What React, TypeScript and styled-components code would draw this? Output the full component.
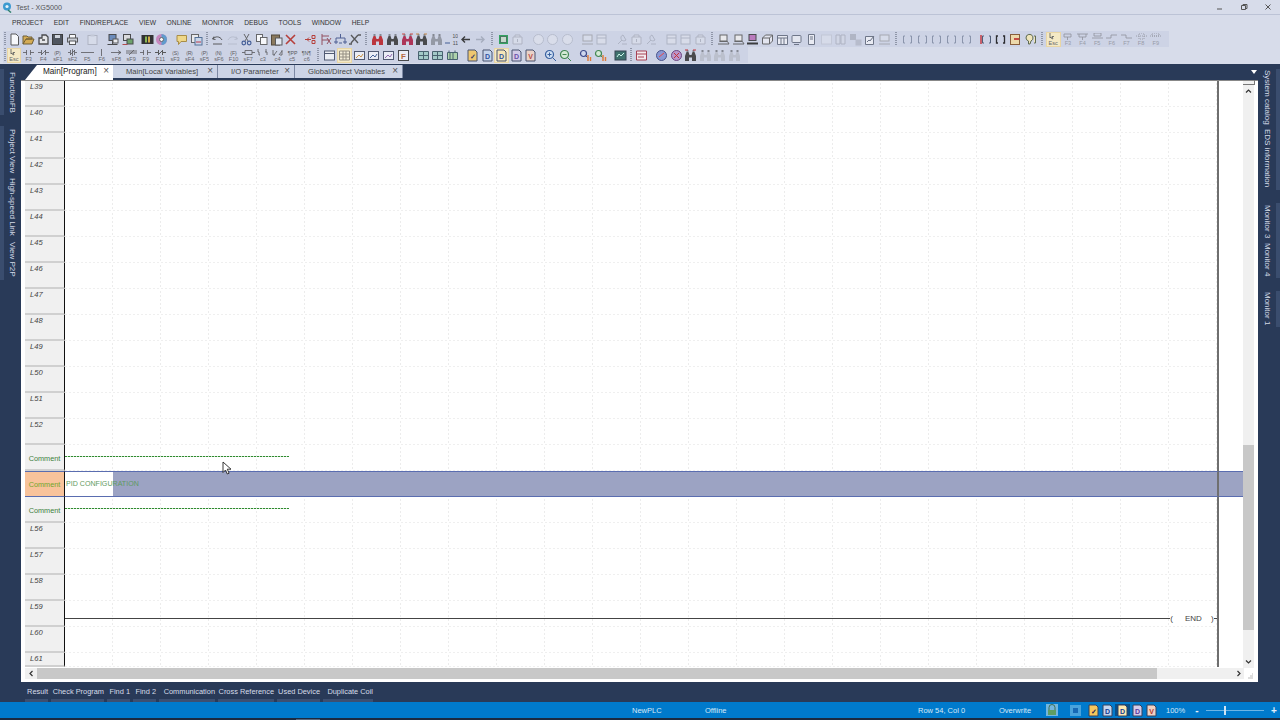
import React from 'react'
import styled, { createGlobalStyle, css } from 'styled-components'

const Global = createGlobalStyle`
	html, body {
		margin: 0;
		padding: 0;
		background: #293a58;
		overflow: hidden;
	}
	* {
		box-sizing: border-box;
	}
`

const NAVY = '#293a58'
const BAND = '#cdd3e5'
const CHROME = '#d7dcea'
const FONT = '"Liberation Sans", Arial, sans-serif'

const Page = styled.div`
	position: relative;
	width: 1280px;
	height: 720px;
	display: flex;
	flex-direction: column;
	overflow: hidden;
	font-family: ${FONT};
	background: ${NAVY};
`

const TitleBar = styled.div`
	height: 15px;
	flex: none;
	display: flex;
	align-items: center;
	padding-left: 2px;
	background: ${CHROME};
	border-bottom: 1px solid #bcc3d6;
	color: #555;
	font-size: 7.2px;
`

const TitleText = styled.span`
	margin-left: 4px;
	flex: 1;
`

const WinButton = styled.span`
	width: 24px;
	display: flex;
	justify-content: center;
	color: #555;
`

const WinButtons = styled.div`
	display: flex;
`

const MenuBar = styled.div`
	height: 15px;
	flex: none;
	display: flex;
	align-items: center;
	gap: 10.6px;
	padding-left: 12px;
	background: ${CHROME};
	color: #333;
	font-size: 6.7px;
`

const ToolbarBlock = styled.div`
	height: 34px;
	flex: none;
	display: flex;
	flex-direction: column;
	padding-top: 1px;
	background: ${CHROME};
`

const ToolRow = styled.div`
	height: 16px;
	display: flex;
	align-items: center;
	align-self: flex-start;
	margin-left: 3px;
	padding-right: 6px;
	background: ${BAND};
`

const Cell = styled.span<{ $on?: boolean; $off?: boolean }>`
	width: 14.65px;
	height: 15px;
	flex: none;
	display: flex;
	flex-direction: column;
	align-items: center;
	justify-content: center;
	color: #444;
	opacity: ${({ $off }) => ($off ? 0.45 : 0.85)};
	${({ $on }) =>
		$on &&
		css`
			background: #fbeec0;
			box-shadow: inset 0 0 0 1px #eed79a;
		`}
`

const KeyLabel = styled.span`
	font-size: 5.6px;
	line-height: 6px;
	color: #555;
`

const Sep = styled.span`
	width: 5.4px;
	flex: none;
`

const Grip = styled.span<{ $w: number }>`
	width: ${({ $w }) => $w}px;
	height: 14px;
	flex: none;
	background: repeating-linear-gradient(180deg, #8f96a8 0 1px, transparent 1px 2px);
	background-size: 2px 100%;
	background-repeat: no-repeat;
	background-position: center;
`

const Body = styled.div`
	flex: 1;
	display: flex;
	min-height: 0;
	padding-top: 1px;
`

const Dock = styled.div<{ $side: 'left' | 'right' }>`
	width: ${({ $side }) => ($side === 'left' ? '21px' : '22px')};
	flex: none;
	display: flex;
	flex-direction: column;
	padding-top: 4px;
`

const DockTab = styled.div<{ $side: 'left' | 'right'; $h: number; $after?: number }>`
	height: ${({ $h }) => $h}px;
	margin-bottom: ${({ $after }) => $after ?? 0}px;
	flex: none;
	writing-mode: vertical-rl;
	text-align: center;
	font-size: 8px;
	color: #d5dbe8;
	white-space: nowrap;
	${({ $side }) =>
		$side === 'left'
			? css`
					width: 20px;
					line-height: 16px;
					border-left: 4px solid #3a4d6e;
				`
			: css`
					line-height: 14px;
					border-right: 4px solid #3a4d6e;
					padding-right: 2px;
				`}
`

const Center = styled.div`
	flex: 1;
	min-width: 0;
	display: flex;
	flex-direction: column;
`

const TabStrip = styled.div`
	height: 15px;
	flex: none;
	display: flex;
	align-items: stretch;
	padding-left: 4px;
`

const Tab = styled.div<{ $active?: boolean; $w: number }>`
	width: ${({ $w }) => $w}px;
	flex: none;
	display: flex;
	align-items: center;
	justify-content: space-between;
	font-size: 7.6px;
	color: #444;
	padding: 0 4px 1px 13px;
	margin-bottom: 2px;
	background: #ccd4e6;
	border-right: 1px solid #7d89a4;
	${({ $active }) =>
		$active &&
		css`
			background: #fff;
			color: #222;
			font-size: 8.2px;
			padding: 0 4px 3px 18px;
			margin-bottom: 0;
			border-right: none;
			clip-path: polygon(12px 0, 100% 0, 100% 100%, 0 100%);
		`}
`

const TabClose = styled.span`
	font-size: 10px;
	color: #555;
	line-height: 1;
`

const TabFill = styled.div`
	flex: 1;
`

const TabMenu = styled.span`
	width: 0;
	height: 0;
	margin: 5px 1px 0 0;
	border-left: 3.5px solid transparent;
	border-right: 3.5px solid transparent;
	border-top: 4px solid #fff;
`

const Panel = styled.div`
	height: 602px;
	flex: none;
	display: flex;
	flex-direction: column;
	background: #fff;
	border-top: 1px solid #888;
	padding: 0 4px 3px 4px;
`

const Upper = styled.div`
	height: 587px;
	flex: none;
	display: flex;
`

const Sheet = styled.div`
	flex: 1;
	min-width: 0;
	display: flex;
	flex-direction: column;
	overflow: hidden;
`

const Row = styled.div<{ $selected?: boolean; $cut?: boolean }>`
	height: ${({ $cut }) => ($cut ? '14px' : '26px')};
	flex: none;
	display: flex;
	${({ $selected }) =>
		$selected &&
		css`
			background: #9ca3c3;
			box-shadow:
				inset 0 1px 0 #5a6db0,
				inset 0 -1px 0 #5a6db0;
		`}
`

const Head = styled.div<{ $kind: 'line' | 'comment' | 'selected' }>`
	width: 40px;
	flex: none;
	display: flex;
	background: #f0f0f0;
	border-right: 1px solid #111;
	border-bottom: 2px solid #d0d0d0;
	${({ $kind }) =>
		$kind === 'line'
			? css`
					padding: 1px 0 0 5px;
					font-style: italic;
					font-size: 7.6px;
					color: #444;
				`
			: css`
					align-items: center;
					justify-content: center;
					padding-top: 2px;
					font-size: 7.3px;
					color: #3d7f3d;
				`}
	${({ $kind }) =>
		$kind === 'selected' &&
		css`
			background: #f8c39b;
			color: #72a52c;
			padding-top: 0;
			border-top: 1px solid #5a6db0;
			border-bottom: 1px solid #5a6db0;
		`}
`

const Lane = styled.div<{ $top?: number }>`
	width: 1154px;
	flex: none;
	display: flex;
	align-items: flex-start;
	padding-top: ${({ $top }) => $top ?? 0}px;
	border-right: 2px solid #6f6f6f;
	background-color: #fff;
	background-image:
		repeating-linear-gradient(90deg, #efefef 0 2px, #fff 2px 4px),
		repeating-linear-gradient(180deg, #fff 0 2px, transparent 2px 4px),
		repeating-linear-gradient(90deg, transparent 0 47px, #ececec 47px 48px);
	background-size:
		100% 1px,
		auto,
		auto;
	background-position:
		0 100%,
		0 0,
		0 0;
	background-repeat: no-repeat, repeat, repeat;
`

const SelectedLane = styled.div`
	width: 1154px;
	flex: none;
	display: flex;
	border-right: 2px solid #6f6f6f;
	border-top: 1px solid #5a6db0;
	border-bottom: 1px solid #5a6db0;
`

const CommentBox = styled.div`
	width: 48px;
	height: 100%;
	flex: none;
	display: flex;
	align-items: center;
	padding-left: 1px;
	background: #fff;
	font-size: 7.1px;
	color: #5f9a62;
	white-space: nowrap;
`

const Dashes = styled.div`
	width: 224px;
	height: 1px;
	background: repeating-linear-gradient(90deg, #2f8a2f 0 2px, #cfe6cf 2px 3px);
`

const RungLine = styled.div`
	width: 1107px;
	height: 1px;
	background: #444;
`

const EndCoil = styled.div`
	display: flex;
	align-items: center;
	height: 1px;
	font-size: 8px;
	color: #444;
`

const EndTail = styled.span`
	width: 3px;
	height: 1px;
	background: #444;
`

const EndParen = styled.span<{ $gap: number }>`
	width: 3px;
	margin-left: ${({ $gap }) => $gap}px;
`

const EndLabel = styled.span`
	width: 15px;
	margin-left: 12px;
	white-space: nowrap;
`

const VScroll = styled.div`
	width: 11px;
	flex: none;
	display: flex;
	flex-direction: column;
	align-items: center;
	background: #f0f0f0;
	color: #444;
`

const VArrow = styled.span<{ $end?: boolean }>`
	height: 19px;
	flex: none;
	display: flex;
	align-items: ${({ $end }) => ($end ? 'flex-end' : 'center')};
	padding-top: 1px;
	padding-bottom: ${({ $end }) => ($end ? '3px' : '0')};
`

const VTrack = styled.div`
	flex: 1;
	width: 100%;
	padding-top: 345px;
`

const VThumb = styled.div`
	height: 185px;
	background: #c8c8c8;
`

const HScroll = styled.div`
	height: 11px;
	flex: none;
	display: flex;
	align-items: center;
	background: #f0f0f0;
	color: #444;
`

const HArrow = styled.span`
	width: 12px;
	flex: none;
	display: flex;
	justify-content: center;
`

const HThumb = styled.div`
	width: 1120px;
	height: 100%;
	flex: none;
	background: #c8c8c8;
`

const HFill = styled.div`
	flex: 1;
`

const Corner = styled.span`
	width: 10px;
	height: 100%;
	flex: none;
	display: flex;
	align-items: flex-end;
	justify-content: flex-end;
	background: #fff;
`

const CornerHook = styled.span`
	position: absolute;
	left: 1243px;
	top: 80px;
	width: 12px;
	height: 5px;
	border-right: 1px solid #777;
	border-bottom: 1px solid #777;
`

const BottomTabs = styled.div`
	height: 20px;
	flex: none;
	display: flex;
	padding-left: 4px;
	gap: 3px;
	padding-top: 4px;
`

const BottomTab = styled.div<{ $w: number }>`
	width: ${({ $w }) => $w}px;
	height: 16px;
	flex: none;
	font-size: 7.4px;
	line-height: 11px;
	color: #d8deea;
	text-align: right;
	white-space: nowrap;
	border-bottom: 3px solid #3d4f70;
`

const StatusBar = styled.div`
	height: 16px;
	flex: none;
	display: flex;
	align-items: center;
	background: #007acc;
	color: #d6e9f7;
	font-size: 7.5px;
`

const StatusText = styled.span<{ $w: number }>`
	width: ${({ $w }) => $w}px;
	flex: none;
	white-space: nowrap;
`

const StatusIcon = styled.span<{ $w?: number; $on?: boolean }>`
	width: ${({ $w }) => $w ?? 14.6}px;
	height: 12px;
	flex: none;
	display: flex;
	justify-content: center;
	align-items: center;
	${({ $on }) =>
		$on &&
		css`
			background: #0a4f88;
		`}
`

const Slider = styled.div`
	width: 58px;
	height: 1px;
	margin: 0 5px 0 4px;
	flex: none;
	display: flex;
	justify-content: center;
	align-items: center;
	background: #6db4e4;
`

const SliderThumb = styled.span`
	width: 2px;
	height: 9px;
	margin-right: 20px;
	flex: none;
	background: #cfe4f4;
`

const Zoomer = styled.span`
	width: 10px;
	flex: none;
	text-align: center;
	font-size: 10px;
	font-weight: bold;
	color: #e4f0fa;
`

const Footer = styled.div`
	height: 2px;
	flex: none;
	padding: 1px 0 0 296px;
	background: #1b2a40;
`

const FooterMark = styled.div`
	width: 24px;
	height: 1px;
	background: #56667c;
`

const Cursor = styled.svg`
	position: absolute;
	left: 222px;
	top: 461px;
`

const S = { fill: 'none', stroke: '#444', strokeWidth: 1 }

const binoculars = (c: string) => (
	<>
		<path d="M1 12V7l1.500-4h2L5.500 6h2l1-3h2L12 7v5H8V8.500H5V12z" fill={c} />
		<path d="M2.500 2h2M8.500 2h2" stroke="#222" />
	</>
)

const docLetter = (fill: string, ink: string, text: string) => (
	<>
		<path d="M2 1h7l2 2v9H2z" fill={fill} stroke="#35415c" />
		<text x="6.5" y="9.6" fontSize="7" fontWeight="bold" textAnchor="middle" fill={ink} fontFamily={FONT}>
			{text}
		</text>
	</>
)

const picture = (c: string) => (
	<>
		<rect x="1.5" y="2.5" width="10" height="8" fill="#eef1f8" stroke="#3c4660" />
		<path d="M3 9l3-3 2 2 2-3" fill="none" stroke={c} />
	</>
)

const bracket = <path d="M4 3H2.500v7H4M9 3h1.500v7H9" fill="none" stroke="#3b4a66" />

const art: Record<string, React.ReactNode> = {
	doc: <path d="M3 1h5l2.500 2.500V12H3z" fill="#fff" stroke="#444" />,
	folder: <path d="M1 11V3h4l1 1h4v2H4l-3 5h9l2-5H4" fill="#d7a63c" stroke="#5f4a18" />,
	box: <path d="M2 11V5h3V2h4l2 2v7zM5 7h3" fill="#e9e9e9" stroke="#333" strokeWidth="1.3" />,
	save: (
		<>
			<rect x="1.5" y="1.5" width="10" height="10" fill="#3a4048" stroke="#222" />
			<rect x="4" y="2" width="5" height="3" fill="#cfd3da" />
		</>
	),
	print: (
		<>
			<path d="M3.500 5V1.500h6V5" fill="#fff" stroke="#444" />
			<rect x="1.5" y="5" width="10" height="4" fill="#c9ccd4" stroke="#444" />
			<rect x="3.5" y="8" width="6" height="3.5" fill="#fff" stroke="#444" />
		</>
	),
	clip: (
		<>
			<rect x="2" y="2.5" width="9" height="9" fill="#e3e6ee" stroke="#8b8f9b" />
			<rect x="4.5" y="1.5" width="4" height="2" fill="#b6bac6" />
		</>
	),
	net: (
		<>
			<rect x="3" y="1.5" width="7" height="6" fill="#5b7fb4" stroke="#333" />
			<path d="M1.500 11.500h10M6.500 8v3" stroke="#333" />
			<rect x="7" y="6" width="5" height="4" fill="#efefef" stroke="#444" />
		</>
	),
	net2: (
		<>
			<rect x="2.5" y="1.5" width="7" height="6" fill="#ddd" stroke="#333" />
			<rect x="6" y="6" width="6" height="5" fill="#5d9a58" stroke="#333" />
			<path d="M1.500 11.500h5" stroke="#a33" />
		</>
	),
	film: (
		<>
			<rect x="0.5" y="2" width="12" height="9" fill="#171717" />
			<rect x="4" y="3.5" width="2" height="6" fill="#7bb23c" />
			<rect x="7" y="3.5" width="2" height="6" fill="#d1a22e" />
		</>
	),
	disc: (
		<>
			<circle cx="6.5" cy="6.5" r="5.5" fill="#c77ab8" />
			<path d="M6.500 1a5.500 5.500 0 0 1 0 11z" fill="#4e93c9" />
			<circle cx="6.5" cy="6.5" r="2" fill="#fff" stroke="#555" />
		</>
	),
	bubble: <path d="M2 2.500h9.500v6H6l-2.500 3v-3H2z" fill="#f6d878" stroke="#a2812c" />,
	pages: (
		<>
			<rect x="1.5" y="1.5" width="7" height="8" fill="#eee" stroke="#555" />
			<rect x="5" y="4.5" width="7" height="7.5" fill="#c9d7ea" stroke="#40608c" />
			<path d="M6 9h5" stroke="#b23" />
		</>
	),
	undo: <path d="M3 3.500L1.500 6 4.500 6.500M2 6c2-3 7-3 9 1M2 11h9" {...S} />,
	redo: <path d="M10 3.500L11.500 6 8.500 6.500M11 6c-2-3-7-3-9 1M2 11h9" {...S} stroke="#9ea4b4" />,
	cut: (
		<>
			<path d="M4 1l4 7M9 1L5 8" fill="none" stroke="#555" />
			<circle cx="3.8" cy="10" r="1.8" fill="none" stroke="#2d4a8a" strokeWidth="1.2" />
			<circle cx="9.2" cy="10" r="1.8" fill="none" stroke="#2d4a8a" strokeWidth="1.2" />
		</>
	),
	copy: (
		<>
			<rect x="1.5" y="1.5" width="6" height="7" fill="#fff" stroke="#555" />
			<rect x="5.5" y="4.5" width="6.5" height="7" fill="#fff" stroke="#555" />
		</>
	),
	paste: (
		<>
			<rect x="1.5" y="2" width="8" height="10" fill="#7f6a46" stroke="#3e3320" />
			<rect x="5.5" y="5" width="6.5" height="7" fill="#e8ecf4" stroke="#444" />
		</>
	),
	del: <path d="M2 2l9 9M11 2L2 11" fill="none" stroke="#b3261e" strokeWidth="1.6" />,
	ins: <path d="M1 6.500h6M5 4.500l-2 2 2 2M8 2.500h3v3H8zM8 7.500h3v3H8z" fill="none" stroke="#b3261e" />,
	cutl: <path d="M3 1v11M3 3h7M3 7h7M8 5l4 6M12 5l-4 6" fill="none" stroke="#8a3b4a" />,
	tree: <path d="M6.500 1v4M2 7V5h9v2M1 8h2v2H1zM10 8h2v2h-2zM5 10h3" fill="none" stroke="#3a4c86" />,
	xc: <path d="M3 2l7 8M10 2l-7 8M1 11h3M10 2h3" fill="none" stroke="#444" strokeWidth="1.3" />,
	binoR: binoculars('#b81a20'),
	bino: binoculars('#333'),
	binoO: (
		<>
			{binoculars('#a81a40')}
			<path d="M1 1h3M9 1h3" stroke="#d0342c" />
		</>
	),
	binoK: (
		<>
			{binoculars('#333')}
			<path d="M1 1h3M9 1h3" stroke="#c47a2c" />
		</>
	),
	binoG: binoculars('#8b8f9b'),
	num: (
		<>
			<text x="13" y="5" fontSize="5" textAnchor="end" fill="#333" fontFamily={FONT}>
				10
			</text>
			<text x="13" y="12" fontSize="5" textAnchor="end" fill="#333" fontFamily={FONT}>
				11
			</text>
			<path d="M0 10h5" stroke="#2d4a8a" />
		</>
	),
	left: <path d="M11 6.500H3M6 3.500l-3 3 3 3" fill="none" stroke="#222" strokeWidth="1.4" />,
	right: <path d="M2 6.500h8M7 3.500l3 3-3 3" fill="none" stroke="#77808f" strokeWidth="1.4" />,
	frame: (
		<>
			<rect x="2.5" y="2.5" width="8" height="8" fill="#2f6b4a" stroke="#1a9a4a" />
			<rect x="4" y="4" width="5" height="5" fill="#c7d8c8" />
		</>
	),
	cross: <path d="M2 4h9v7H2zM4 4V2h5v2M6.500 6v3" fill="#e3e6ee" stroke="#8b8f9b" />,
	circ: <circle cx="6.5" cy="6.5" r="5" fill="#e9ebf2" stroke="#9ca1b0" />,
	pcG: (
		<>
			<rect x="2" y="2" width="9" height="6" fill="#e3e6ee" stroke="#777" />
			<path d="M1 11h11" stroke="#777" />
		</>
	),
	win: (
		<>
			<rect x="2" y="2" width="9" height="9" fill="#e6e8f0" stroke="#8a8f9e" />
			<path d="M2 5h9" stroke="#8a8f9e" />
		</>
	),
	wr: <path d="M2 11l4-4M7 2a3 3 0 1 0 3 5zM6 11h5" fill="none" stroke="#8a8f9e" />,
	pc: (
		<>
			<rect x="3" y="2" width="7" height="6" fill="#eee" stroke="#555" />
			<path d="M1 11h11M2.500 8.500h8L12 11" fill="none" stroke="#555" />
		</>
	),
	pcP: (
		<>
			<rect x="3" y="1.5" width="7" height="6" fill="#b66bb7" stroke="#333" />
			<path d="M1 10.500h11" stroke="#222" strokeWidth="2" />
		</>
	),
	cube: <path d="M1.500 5l3-3h7v6l-3 3h-7zM1.500 5h7v6M8.500 5l3-3" fill="#e7e9f1" stroke="#555" />,
	table: <path d="M1.500 2.500h10v9h-10zM1.500 5h10M5 5v6.500M8 5v6.500" fill="#eef0f6" stroke="#5e6678" />,
	mon: (
		<>
			<rect x="2" y="2.5" width="9" height="7" rx="1" fill="#e8eaf1" stroke="#5e6678" />
			<path d="M4 11.500h5" stroke="#5e6678" />
		</>
	),
	slim: <path d="M3.500 1.500h6v10h-6zM5 4h3M5 6h3" fill="#eef0f6" stroke="#5e6678" />,
	pale: <rect x="1.5" y="2" width="10" height="9" fill="#e3e6ee" stroke="#b6bac6" />,
	bars: <path d="M2 2h4v9H2zM7 2h4v9H7z" fill="#d7dbe6" stroke="#8b8f9b" />,
	quad: (
		<>
			<rect x="1" y="1" width="6" height="6" fill="#8d919e" />
			<rect x="6.5" y="6.5" width="6" height="6" fill="#9da1ae" />
		</>
	),
	chart: <path d="M1.500 3.500h8v8h-8zM3 9l2-2 1 1 4-5" fill="#eef0f6" stroke="#5e6678" />,
	br: bracket,
	brR: (
		<>
			{bracket}
			<path d="M1 2v9" stroke="#c4161c" strokeWidth="1.4" />
		</>
	),
	brD: <path d="M4 3H2.500v7H4M9 3h1.500v7H9" fill="none" stroke="#111" strokeWidth="1.3" />,
	book: (
		<>
			<rect x="1.5" y="1.5" width="9" height="10" fill="#f2dba2" stroke="#7c4a1f" />
			<rect x="5" y="5" width="5" height="2" fill="#c43428" />
		</>
	),
	bulb: <path d="M2 5a3.500 3.500 0 1 1 5 3l-1 3H4.500V8A3.500 3.500 0 0 1 2 5zM10 3h1.500v7H10" fill="#f6e9b4" stroke="#4c5a3a" />,
	winA: (
		<>
			<rect x="1.5" y="2" width="10" height="9" fill="#f1f3f8" stroke="#3c4660" />
			<path d="M1.500 4.500h10" stroke="#3c4660" />
		</>
	),
	winB: <path d="M1.500 2h10v9h-10zM1.500 5h10M1.500 8h10M5 2v9M8 2v9" fill="#fbf3d6" stroke="#8b8372" />,
	picY: picture('#c9892c'),
	picB: picture('#2f4f8c'),
	picP: picture('#8a5aa8'),
	fBox: (
		<>
			<rect x="1.5" y="1.5" width="10" height="10" fill="#f1f3f8" stroke="#333" />
			<text x="6.5" y="9.6" fontSize="8" fontWeight="bold" textAnchor="middle" fill="#b5561d" fontFamily={FONT}>
				F
			</text>
		</>
	),
	grid: <path d="M1.500 2.500h10v8h-10zM1.500 6.500h10M6.500 2.500v8" fill="#9cc9c4" stroke="#33505c" />,
	grid2: <path d="M1.500 3.500h10v7h-10zM4 3.500v7M7 3.500v7M3 1.500v2M9 1.500v2" fill="#a9d3a2" stroke="#33505c" />,
	dY: docLetter('#f4c65c', '#225', '✓'),
	dB: docLetter('#c4d5ee', '#123c94', 'D'),
	dH: docLetter('#fde9b0', '#123c94', 'D'),
	dP: docLetter('#d4cbe9', '#5a3aa0', 'D'),
	dR: docLetter('#f0d2c4', '#b0352c', 'V'),
	zoomIn: (
		<>
			<circle cx="5.5" cy="5.5" r="4" fill="#cfe0f5" stroke="#1f4d94" strokeWidth="1.2" />
			<path d="M8.500 8.500l3.500 3.500M3.500 5.500h4M5.500 3.500v4" fill="none" stroke="#1f4d94" />
		</>
	),
	zoomOut: (
		<>
			<circle cx="5.5" cy="5.5" r="4" fill="#d6eed2" stroke="#2b7a3a" strokeWidth="1.2" />
			<path d="M8.500 8.500l3.500 3.500M3.500 5.500h4" fill="none" stroke="#2b7a3a" />
		</>
	),
	findA: (
		<>
			<circle cx="4.5" cy="4.5" r="3" fill="#cfd8f0" stroke="#23327a" strokeWidth="1.2" />
			<path d="M6.500 6.500l2 2" stroke="#23327a" />
			<path d="M9 6v6M11.500 8v4" stroke="#e06c1c" strokeWidth="1.4" />
		</>
	),
	findB: (
		<>
			<circle cx="4.5" cy="4.5" r="3" fill="#d6eed2" stroke="#2b7a3a" strokeWidth="1.2" />
			<path d="M6.500 6.500l2 2" stroke="#2b7a3a" />
			<path d="M9 6v6M11.500 8v4" stroke="#e06c1c" strokeWidth="1.4" />
		</>
	),
	scope: (
		<>
			<rect x="1" y="2" width="11" height="9" fill="#24605a" stroke="#1d2d3d" />
			<path d="M3 8l2-3 2 2 3-3" fill="none" stroke="#cfe" />
		</>
	),
	panel: <path d="M1.500 2h10v9h-10zM1.500 5h10M3 8h6" fill="#fbeff0" stroke="#a12a3c" />,
	dial: (
		<>
			<circle cx="6.5" cy="6.5" r="5" fill="#7f8ed0" stroke="#333f7c" />
			<path d="M4 8l5-4" stroke="#e33" />
		</>
	),
	dial2: (
		<>
			<circle cx="6.5" cy="6.5" r="5" fill="#b78bc6" stroke="#5b3070" />
			<path d="M4 4l5 5M9 4l-5 5" stroke="#c4161c" />
		</>
	),
	glass: (
		<>
			{binoculars('#333')}
			<path d="M1 1h3M9 1h3" stroke="#c4161c" />
		</>
	),
	glassG: binoculars('#b9bdc9'),
}

const contact = (kids: React.ReactNode) => (
	<svg width="13" height="7" viewBox="0 0 13 7">
		{kids}
	</svg>
)

const small = (t: string) => (
	<text x="6.5" y="5.5" fontSize="5.2" textAnchor="middle" fill="#444" fontFamily={FONT}>
		{t}
	</text>
)

const wire = { stroke: '#444', strokeWidth: 0.8, fill: 'none' }

const ladder: Record<string, React.ReactNode> = {
	F3: <path d="M1 3.500h3.500M4.500 1v5M8.500 1v5M8.500 3.500H12" {...wire} />,
	F4: <path d="M1 3.500h3.500M4.500 1v5M8.500 1v5M8.500 3.500H12M4 6l5-5" {...wire} />,
	sF1: small('⟨P⟩'),
	sF2: <path d="M2 3.500h2M4.500 1v5M8.500 1v5M9 3.500h2M4 6l5-5M6.500 0v7" {...wire} />,
	F5: <path d="M0 3.500h13" {...wire} />,
	F6: <path d="M6.500 0v7" {...wire} />,
	sF8: <path d="M1 3.500h10M8 1.500l3 2-3 2" {...wire} />,
	sF9: <path d="M1 2h11M1 4h11M4 6l5-5" {...wire} />,
	F11: <path d="M1 3.500h3.500M4.500 1v5M8.500 1v5M8.500 3.500H12M4 6l5-5" {...wire} strokeWidth={1} />,
	sF3: small('⟨S⟩'),
	sF4: small('⟨R⟩'),
	sF5: small('⟨P⟩'),
	sF6: small('⟨N⟩'),
	F10: small('{F}'),
	sF7: <path d="M3 1.500h7v4H3zM0 3.500h3M10 3.500h3" {...wire} />,
	c3: <path d="M2 0v3h1v3M10 0v3h1v3M3 6h1M9 3h1" {...wire} />,
	c4: <path d="M2 1v5h2M11 1v5H9M3 6l3-4M8 6l3-4" {...wire} />,
	c5: small('¶PP'),
	c6: small('¶N¶'),
}

const Icon = ({ name }: { name: string }) => (
	<svg width="13" height="13" viewBox="0 0 13 13">
		{art[name]}
	</svg>
)

const EscKey = () => (
	<Cell $on>
		{contact(<path d="M3 0v5l1-1 1 2 1-.5L5 3.500h2" {...wire} />)}
		<KeyLabel>Esc</KeyLabel>
	</Cell>
)

const Ladder = ({ k, name }: { k: string; name?: string }) => (
	<Cell>
		{contact(ladder[name ?? k])}
		<KeyLabel>{k}</KeyLabel>
	</Cell>
)

// | small gap, ~ short grip, # wide grip
const FIRST_ROW =
	'doc folder box save print | clip | net net2 | film disc | bubble pages ~ undo redo cut copy paste del | ins cutl tree xc # binoR bino binoO binoK binoG num left right # frame cross | circ circ circ | pcG win | wr cross wr | win win cross # pc pc pcP cube table mon slim pale bars quad chart pcG # br br br br br | brR brD book bulb #'

const SECOND_ROW =
	'winA winB picY picB picP fBox | grid grid grid2 | dY dB dH dP dR | zoomIn zoomOut | findA findB | scope ~ panel | dial dial2 glass glassG glassG glassG'

const OFF = new Set(['clip', 'redo', 'right', 'cross', 'circ', 'pcG', 'win', 'wr', 'br', 'pale', 'bars', 'quad'])

const Tool = ({ name }: { name: string }) => {
	if (name === '|') return <Sep />
	if (name === '#') return <Grip $w={8.4} />
	if (name === '~') return <Grip $w={6.4} />
	return (
		<Cell $off={OFF.has(name)} $on={name === 'winB' || name === 'dH'}>
			<Icon name={name} />
		</Cell>
	)
}

const F_KEYS: [string, React.ReactNode][] = [
	['F3', <path key="a" d="M3 1h7v3H3zM6.500 4v3" {...wire} />],
	['F4', <path key="b" d="M1 1h11M3 1v3h7V1M6.500 4v3" {...wire} />],
	['F5', <path key="c" d="M3 0h7v3H3zM1 5h11" {...wire} />],
	['F6', <path key="d" d="M1 5h5V2h6" {...wire} />],
	['F7', <path key="e" d="M1 2h5v3h6" {...wire} />],
	['F8', <path key="f" d="M1 3h11M4 0h5v6H4z" {...wire} strokeDasharray="1 1" />],
	['F9', <path key="g" d="M1 3h11M3 0h7v3H3z" {...wire} strokeDasharray="1 1" />],
]

const rows = Array.from({ length: 14 }, (_, i) => `L${39 + i}`)
const tail = ['L56', 'L57', 'L58', 'L59', 'L60']

const LineRow = ({ label, children, top, cut }: { label: string; children?: React.ReactNode; top?: number; cut?: boolean }) => (
	<Row $cut={cut}>
		<Head $kind="line">{label}</Head>
		<Lane $top={top}>{children}</Lane>
	</Row>
)

const CommentRow = () => (
	<Row>
		<Head $kind="comment">Comment</Head>
		<Lane $top={11}>
			<Dashes />
		</Lane>
	</Row>
)

const tabs = [
	{ label: 'Main[Program]', w: 88, active: true },
	{ label: 'Main[Local Variables]', w: 105 },
	{ label: 'I/O Parameter', w: 77 },
	{ label: 'Global/Direct Variables', w: 108 },
]

const lower = [
	{ label: 'Result', w: 23 },
	{ label: 'Check Program', w: 53 },
	{ label: 'Find 1', w: 23 },
	{ label: 'Find 2', w: 23 },
	{ label: 'Communication', w: 56 },
	{ label: 'Cross Reference', w: 56 },
	{ label: 'Used Device', w: 43 },
	{ label: 'Duplicate Coil', w: 50 },
]

const Chevron = ({ d }: { d: string }) => (
	<svg width="7" height="7" viewBox="0 0 7 7">
		<path d={d} fill="none" stroke="#333" strokeWidth="1.2" />
	</svg>
)

export default function App() {
	return (
		<Page>
			<Global />
			<TitleBar>
				<svg width="10" height="11" viewBox="0 0 10 11">
					<circle cx="5" cy="4.5" r="4" fill="#3d9ad0" />
					<circle cx="5" cy="4.5" r="1.6" fill="#e8f3fa" />
					<path d="M6 8l3 2.500" stroke="#2f7f6c" strokeWidth="1.5" />
				</svg>
				<TitleText>Test - XG5000</TitleText>
				<WinButtons>
					<WinButton>
						<svg width="8" height="8" viewBox="0 0 8 8">
							<path d="M1 6h5" stroke="#555" />
						</svg>
					</WinButton>
					<WinButton>
						<svg width="8" height="8" viewBox="0 0 8 8">
							<path d="M1.500 2.500h4v4h-4zM3 2.500v-1h4v4H5.500" fill="none" stroke="#555" />
						</svg>
					</WinButton>
					<WinButton>
						<svg width="8" height="8" viewBox="0 0 8 8">
							<path d="M1.500 1.500l5 5M6.500 1.500l-5 5" stroke="#555" />
						</svg>
					</WinButton>
				</WinButtons>
			</TitleBar>
			<MenuBar>
				{['PROJECT', 'EDIT', 'FIND/REPLACE', 'VIEW', 'ONLINE', 'MONITOR', 'DEBUG', 'TOOLS', 'WINDOW', 'HELP'].map((m) => (
					<span key={m}>{m}</span>
				))}
			</MenuBar>
			<ToolbarBlock>
				<ToolRow>
					<Grip $w={3.7} />
					{FIRST_ROW.split(' ').map((n, i) => (
						<Tool key={i} name={n} />
					))}
					<EscKey />
					{F_KEYS.map(([k, p]) => (
						<Cell key={k} $off>
							{contact(p)}
							<KeyLabel>{k}</KeyLabel>
						</Cell>
					))}
				</ToolRow>
				<ToolRow>
					<Grip $w={3.7} />
					<EscKey />
					{['F3', 'F4', 'sF1', 'sF2', 'F5', 'F6', 'sF8', 'sF9'].map((k) => (
						<Ladder key={k} k={k} />
					))}
					<Ladder k="F9" name="F3" />
					{['F11', 'sF3', 'sF4', 'sF5', 'sF6', 'F10', 'sF7', 'c3', 'c4', 'c5', 'c6'].map((k) => (
						<Ladder key={k} k={k} />
					))}
					<Grip $w={8.4} />
					{SECOND_ROW.split(' ').map((n, i) => (
						<Tool key={i} name={n} />
					))}
				</ToolRow>
			</ToolbarBlock>
			<Body>
				<Dock $side="left">
					<DockTab $side="left" $h={46} $after={11}>
						FunctionFB
					</DockTab>
					<DockTab $side="left" $h={50}>
						Project View
					</DockTab>
					<DockTab $side="left" $h={62}>
						High-speed Link
					</DockTab>
					<DockTab $side="left" $h={42}>
						View P2P
					</DockTab>
				</Dock>
				<Center>
					<TabStrip>
						{tabs.map((t) => (
							<Tab key={t.label} $w={t.w} $active={t.active}>
								{t.label}
								<TabClose>×</TabClose>
							</Tab>
						))}
						<TabFill />
						<TabMenu />
					</TabStrip>
					<Panel>
						<Upper>
							<Sheet>
								{rows.map((r) => (
									<LineRow key={r} label={r} />
								))}
								<CommentRow />
								<Row $selected>
									<Head $kind="selected">Comment</Head>
									<SelectedLane>
										<CommentBox>PID CONFIGURATION</CommentBox>
									</SelectedLane>
								</Row>
								<CommentRow />
								{tail.map((r) => (
									<LineRow key={r} label={r} top={r === 'L59' ? 17 : 0}>
										{r === 'L59' && (
											<>
												<RungLine />
												<EndCoil>
													<span>(</span>
													<EndLabel>END</EndLabel>
													<EndParen $gap={11}>)</EndParen>
													<EndTail />
												</EndCoil>
											</>
										)}
									</LineRow>
								))}
								<LineRow label="L61" cut />
							</Sheet>
							<VScroll>
								<VArrow>
									<Chevron d="M1 4.500l2.500-2.500L6 4.500" />
								</VArrow>
								<VTrack>
									<VThumb />
								</VTrack>
								<VArrow $end>
									<Chevron d="M1 2.500L3.500 5 6 2.500" />
								</VArrow>
							</VScroll>
						</Upper>
						<HScroll>
							<HArrow>
								<Chevron d="M4.500 1L2 3.500 4.500 6" />
							</HArrow>
							<HThumb />
							<HFill />
							<HArrow>
								<Chevron d="M2.500 1L5 3.500 2.500 6" />
							</HArrow>
							<Corner>
								<svg width="7" height="7" viewBox="0 0 7 7">
									<path d="M1 6h5M3 4h3M5 2h1" stroke="#bbb" />
								</svg>
							</Corner>
						</HScroll>
					</Panel>
					<BottomTabs>
						{lower.map((t) => (
							<BottomTab key={t.label} $w={t.w}>
								{t.label}
							</BottomTab>
						))}
					</BottomTabs>
				</Center>
				<Dock $side="right">
					<DockTab $side="right" $h={57}>
						System catalog
					</DockTab>
					<DockTab $side="right" $h={64} $after={13}>
						EDS information
					</DockTab>
					<DockTab $side="right" $h={38}>
						Monitor 3
					</DockTab>
					<DockTab $side="right" $h={37} $after={13}>
						Monitor 4
					</DockTab>
					<DockTab $side="right" $h={36}>
						Monitor 1
					</DockTab>
				</Dock>
			</Body>
			<StatusBar>
				<StatusText $w={632} />
				<StatusText $w={73}>NewPLC</StatusText>
				<StatusText $w={213}>Offline</StatusText>
				<StatusText $w={81}>Row 54, Col 0</StatusText>
				<StatusText $w={46}>Overwrite</StatusText>
				<StatusIcon $w={14}>
					<svg width="12" height="12" viewBox="0 0 12 12">
						<rect width="12" height="12" fill="#74b6dd" />
						<path d="M3 6V3.500a3 3 0 0 1 6 0V6" fill="none" stroke="#3e6e52" />
						<rect x="2" y="6" width="8" height="5" fill="#5f9e62" />
					</svg>
				</StatusIcon>
				<StatusText $w={9} />
				<StatusIcon $w={14}>
					<svg width="11" height="11" viewBox="0 0 11 11">
						<rect width="11" height="11" fill="#4aa3dc" />
						<rect x="3" y="3" width="5" height="5" fill="#1769b5" />
					</svg>
				</StatusIcon>
				<StatusText $w={4} />
				<StatusIcon>
					<Icon name="dY" />
				</StatusIcon>
				<StatusIcon>
					<Icon name="dB" />
				</StatusIcon>
				<StatusIcon $on>
					<Icon name="dH" />
				</StatusIcon>
				<StatusIcon>
					<Icon name="dP" />
				</StatusIcon>
				<StatusIcon>
					<Icon name="dR" />
				</StatusIcon>
				<StatusText $w={7} />
				<StatusText $w={26}>100%</StatusText>
				<Zoomer>-</Zoomer>
				<Slider>
					<SliderThumb />
				</Slider>
				<Zoomer>+</Zoomer>
			</StatusBar>
			<Footer>
				<FooterMark />
			</Footer>
			<CornerHook />
			<Cursor width="11" height="15" viewBox="0 0 11 15">
				<path d="M1 1v10.500l2.500-2.500 1.800 4 1.800-.8-1.800-4H9z" fill="#fff" stroke="#222" strokeWidth="0.9" />
			</Cursor>
		</Page>
	)
}
